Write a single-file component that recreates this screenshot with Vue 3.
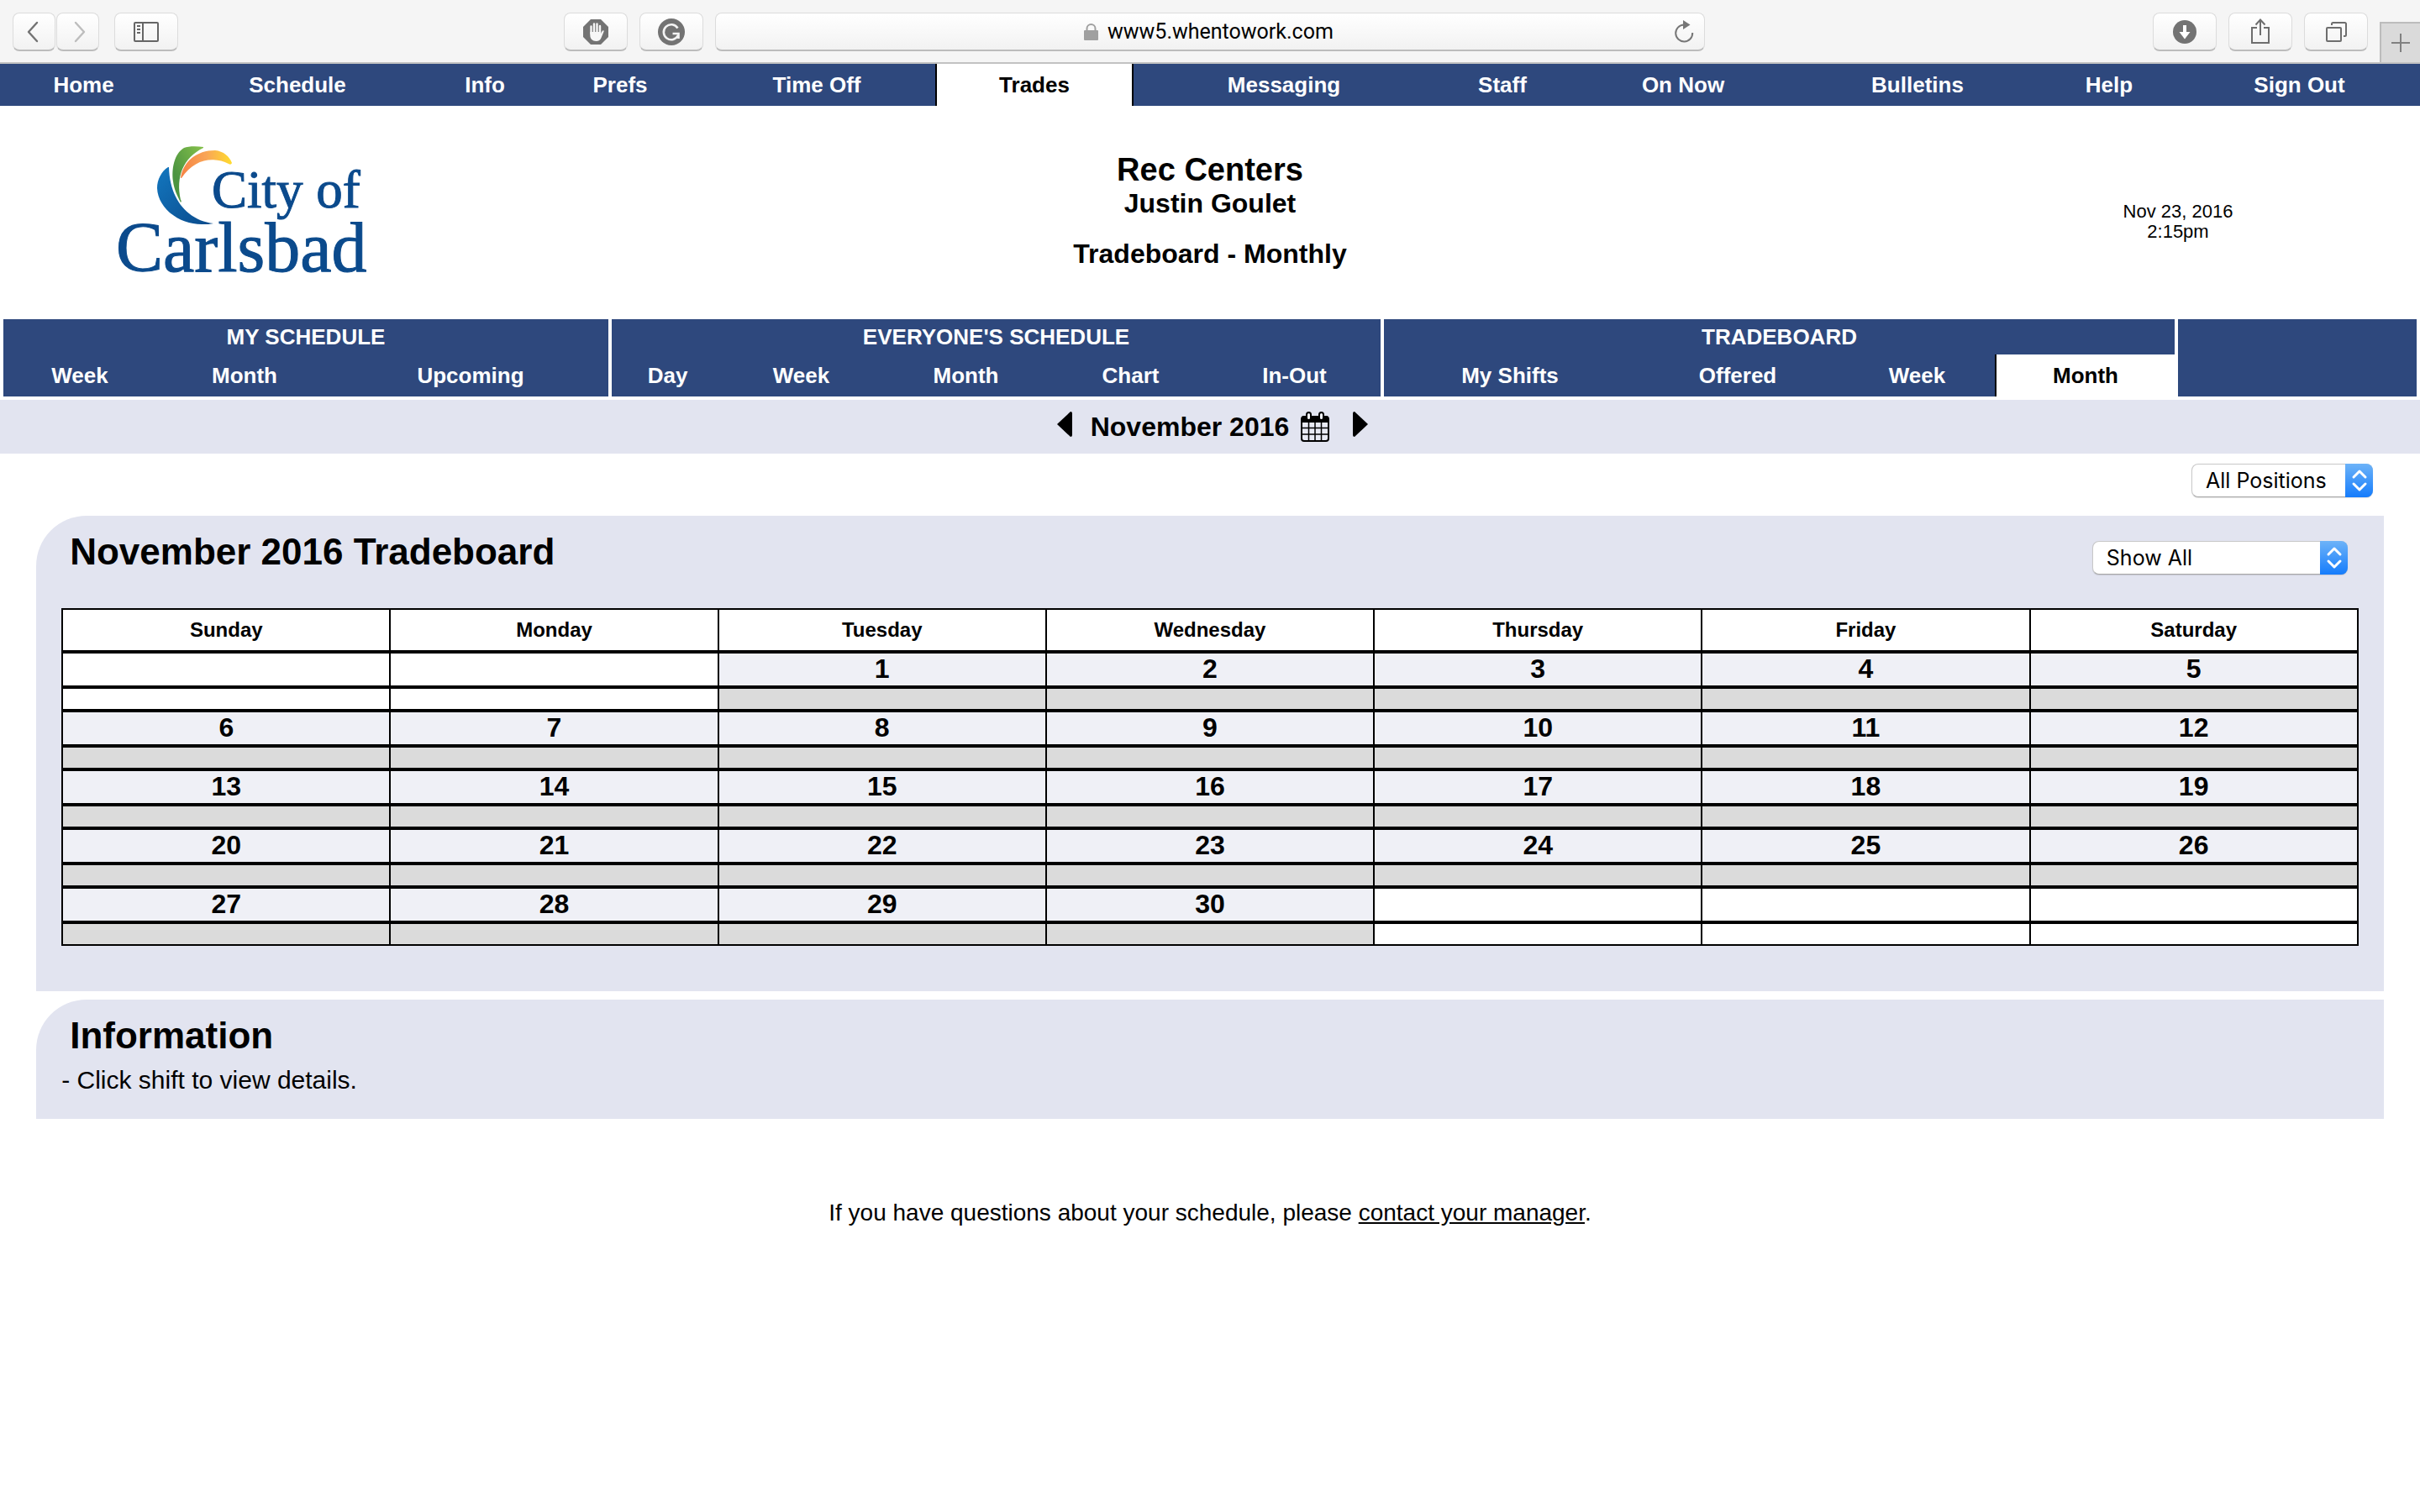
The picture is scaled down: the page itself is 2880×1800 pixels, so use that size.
<script setup>
import { ref } from 'vue'

const address = ref('www5.whentowork.com')
const position = ref('All Positions')
const filter = ref('Show All')

const mainNav = ['Home', 'Schedule', 'Info', 'Prefs', 'Time Off', 'Trades', 'Messaging', 'Staff', 'On Now', 'Bulletins', 'Help', 'Sign Out']

const sections = [
  { id: 'mine', title: 'MY SCHEDULE', links: ['Week', 'Month', 'Upcoming'] },
  { id: 'everyone', title: "EVERYONE'S SCHEDULE", links: ['Day', 'Week', 'Month', 'Chart', 'In-Out'] },
  { id: 'trade', title: 'TRADEBOARD', links: ['My Shifts', 'Offered', 'Week', 'Month'], active: 'Month' },
]

const dayNames = ['Sunday', 'Monday', 'Tuesday', 'Wednesday', 'Thursday', 'Friday', 'Saturday']

// November 2016 starts on a Tuesday and has 30 days
const weeks = Array.from({ length: 5 }, (_, w) =>
  Array.from({ length: 7 }, (_, d) => {
    const n = w * 7 + d - 1
    return n >= 1 && n <= 30 ? n : null
  })
)
</script>

<template>
  <div class="page">
    <div class="toolbar">
      <div class="tools tools-left">
        <div class="group">
          <div class="pair">
            <button class="tool back" aria-label="Back">
              <svg width="18" height="26" viewBox="0 0 18 26"><path d="M12 2 2 13l10 11" fill="none" stroke="#737373" stroke-width="2.4" stroke-linecap="round" stroke-linejoin="round" /></svg>
            </button>
            <button class="tool back" aria-label="Forward">
              <svg width="18" height="26" viewBox="0 0 18 26"><path d="M6 2l10 11L6 24" fill="none" stroke="#bdbdbd" stroke-width="2.4" stroke-linecap="round" stroke-linejoin="round" /></svg>
            </button>
          </div>
          <button class="tool" aria-label="Show sidebar">
            <svg width="30" height="24" viewBox="0 0 30 24"><g fill="none" stroke="#666" stroke-width="2"><rect x="1" y="1" width="28" height="22" rx="1" /><path d="M11 1v22M4 5h4M4 9h4M4 13h4" /></g></svg>
          </button>
        </div>
        <div class="group extensions">
          <button class="tool" aria-label="Content blocker">
            <svg width="30" height="30" viewBox="0 0 30 30">
              <path d="M9 0h12l9 9v12l-9 9H9l-9-9V9z" fill="#737373" />
              <path d="M9.500 17V8.500M13 15V5.500M16.500 15V5.500M20 16V8" stroke="#f7f7f7" stroke-width="2.400" stroke-linecap="round" />
              <path d="M8.300 15h12.900v2l1.600-3.200c.8-1.200 2.200-.6 1.800.7L21.500 22c-1 2.500-3 4-6 4-4.500 0-7.200-3-7.200-7z" fill="#f7f7f7" />
            </svg>
          </button>
          <button class="tool" aria-label="Grammar checker">
            <svg width="32" height="32" viewBox="0 0 32 32">
              <circle cx="16" cy="16" r="16" fill="#737373" />
              <path d="M23.500 11.500A9 9 0 1 0 24 20M17.500 18h7v6" fill="none" stroke="#f4f4f4" stroke-width="2.600" />
            </svg>
          </button>
        </div>
      </div>
      <div class="tool address">
        <svg width="17" height="20" viewBox="0 0 17 20"><path d="M3.500 9V6a5 5 0 0 1 10 0v3" fill="none" stroke="#a0a0a0" stroke-width="2" /><rect y="8" width="17" height="12" rx="1" fill="#a0a0a0" /></svg>
        <input v-model="address" type="text" aria-label="Address" />
        <button class="reload" aria-label="Reload">
          <svg width="24" height="27" viewBox="0 0 24 27"><path d="M12 5.500A10 10 0 1 0 22.200 15" fill="none" stroke="#777" stroke-width="2" /><path d="M11 0v11l8.500-5.500z" fill="#777" /></svg>
        </button>
      </div>
      <div class="tools tools-right">
        <button class="tool" aria-label="Downloads">
          <svg width="28" height="28" viewBox="0 0 28 28"><circle cx="14" cy="14" r="14" fill="#737373" /><path d="M12 6h4v8h4.500L14 22.500 7.500 14H12z" fill="#fff" /></svg>
        </button>
        <button class="tool" aria-label="Share">
          <svg class="share" width="24" height="30" viewBox="0 0 24 30"><path d="M8 11H2v18h20V11h-6M12 20V2M6.500 7.500 12 1.500l5.500 6" fill="none" stroke="#6e6e6e" stroke-width="2" /></svg>
        </button>
        <button class="tool" aria-label="Show all tabs">
          <svg width="25" height="24" viewBox="0 0 25 24"><g fill="none" stroke="#6e6e6e" stroke-width="2"><rect x="1" y="7" width="17" height="16" rx="1" /><path d="M7 4V2.500Q7 1 8.500 1h14Q24 1 24 2.500v13Q24 17 22.500 17H21" /></g></svg>
        </button>
        <button class="new-tab" aria-label="New tab">
          <svg width="22" height="22" viewBox="0 0 22 22"><path d="M11 0v22M0 11h22" stroke="#808080" stroke-width="2" /></svg>
        </button>
      </div>
    </div>

    <nav class="main-nav" aria-label="Main">
      <a v-for="item in mainNav" :key="item" href="#" :class="{ active: item === 'Trades' }">{{ item }}</a>
    </nav>

    <header class="header">
      <svg class="logo" width="300" height="160" viewBox="0 0 300 160" role="img" aria-label="City of Carlsbad">
        <defs>
          <linearGradient id="wave" x1="0" y1="0" x2="1" y2="1"><stop offset="0" stop-color="#1377bf" /><stop offset="1" stop-color="#0a4a8b" /></linearGradient>
          <linearGradient id="leaf" x1="0" y1="1" x2="1" y2="0"><stop offset="0.300" stop-color="#4c9440" /><stop offset="1" stop-color="#86c14b" /></linearGradient>
          <linearGradient id="sun" x1="0" y1="0" x2="1" y2="0"><stop offset="0" stop-color="#f58345" /><stop offset="0.500" stop-color="#f9a557" /><stop offset="1" stop-color="#ffdc2e" /></linearGradient>
        </defs>
        <g transform="translate(2 0)">
          <path d="M60 25C52 30 47 40 47 50c1 24 26 43 53 43 6 0 10 0 14-1C86 89 62 66 61 25z" fill="url(#wave)" />
          <path d="M102 1C94 0 84 0 79 2 67 9 64 28 66 42c1 9 5 17 9 25 1-1 1-2 0-3C69 36 78 14 102 2z" fill="url(#leaf)" />
          <path d="M75 38c3-20 19-33 41-33 10 1 17 7 20 15-1 2-2 2-4 1-18-9-41-6-56 17z" fill="url(#sun)" />
        </g>
        <g class="logo-text">
          <text x="114" y="73" font-size="63">City of</text>
          <text x="0" y="149" font-size="84">Carlsbad</text>
        </g>
      </svg>
      <div class="heading">
        <h1>Rec Centers</h1>
        <p>Justin Goulet</p>
        <p class="view">Tradeboard - Monthly</p>
      </div>
      <div class="clock">Nov 23, 2016<br />2:15pm</div>
    </header>

    <nav class="sub-nav" aria-label="Schedules">
      <section v-for="s in sections" :key="s.id">
        <h2>{{ s.title }}</h2>
        <div class="links" :class="s.id">
          <a v-for="l in s.links" :key="l" href="#" :class="{ active: l === s.active }">{{ l }}</a>
        </div>
      </section>
      <section></section>
    </nav>

    <div class="month-bar">
      <button class="arrow prev" aria-label="Previous month"><svg width="18" height="30" viewBox="0 0 18 30"><path d="M16 0q2 0 2 2v26q0 2-2 2L0 15z" /></svg></button>
      <strong>November 2016</strong>
      <button class="calendar-button" aria-label="Pick a month">
        <svg width="34" height="36" viewBox="0 0 34 36">
          <rect x="1" y="6" width="32" height="29" rx="3" fill="#e8eaf4" stroke="#000" stroke-width="2" />
          <path d="M1 13V8q0-3 3-3h26q3 0 3 3v5z" />
          <path d="M9.500 12v22M17 12v22M24.500 12v22M1 19.500h32M1 27h32" stroke="#000" stroke-width="1.500" />
          <g fill="#f4f5fb" stroke="#000" stroke-width="2"><rect x="7" y="1" width="5" height="9" rx="2.500" /><rect x="22" y="1" width="5" height="9" rx="2.500" /></g>
        </svg>
      </button>
      <button class="arrow next" aria-label="Next month"><svg width="18" height="30" viewBox="0 0 18 30"><path d="M2 0Q0 0 0 2v26q0 2 2 2l16-15z" /></svg></button>
    </div>

    <div class="position-row">
      <div class="picker positions">
        <select v-model="position" aria-label="Positions"><option>All Positions</option></select>
        <svg width="33" height="40" viewBox="0 0 33 40"><path d="M10 16l7-7 7 7M10 24l7 7 7-7" /></svg>
      </div>
    </div>

    <main>
      <section class="panel board">
        <div class="panel-head">
          <h2>November 2016 Tradeboard</h2>
          <div class="picker filter">
            <select v-model="filter" aria-label="Shifts shown"><option>Show All</option></select>
            <svg width="33" height="40" viewBox="0 0 33 40"><path d="M10 16l7-7 7 7M10 24l7 7 7-7" /></svg>
          </div>
        </div>
        <div class="table-wrap">
          <table>
            <thead>
              <tr><th v-for="d in dayNames" :key="d" scope="col">{{ d }}</th></tr>
            </thead>
            <tbody v-for="(week, w) in weeks" :key="w">
              <tr class="dates"><td v-for="(n, i) in week" :key="i" :class="{ day: n }">{{ n }}</td></tr>
              <tr class="shifts"><td v-for="(n, i) in week" :key="i" :class="{ day: n }"></td></tr>
            </tbody>
          </table>
        </div>
      </section>

      <section class="panel info">
        <h2>Information</h2>
        <p>- Click shift to view details.</p>
      </section>
    </main>

    <footer>If you have questions about your schedule, please <a href="#">contact your manager</a>.</footer>
  </div>
</template>

<style>
body {
  background: #fff;
}
</style>

<style scoped>
.page {
  font-family: "Liberation Sans", Arial, sans-serif;
  color: #000;
}
h1, h2, p {
  margin: 0;
}
a {
  color: inherit;
}
button {
  padding: 0;
  border: 0;
  background: none;
}
svg {
  display: block;
}

/* browser toolbar */
.toolbar {
  display: grid;
  grid-template-columns: minmax(0, 851fr) minmax(0, 1178fr) minmax(0, 851fr);
  height: 74px;
  border-bottom: 2px solid #c2c2c2;
  background: #f5f5f5;
}
.tools {
  display: flex;
  padding-top: 15px;
}
.tools-left {
  justify-content: space-between;
  padding-left: 15px;
  padding-right: 14px;
}
.tools-right {
  justify-content: flex-end;
  gap: 14px;
}
.group {
  display: flex;
  gap: 18px;
}
.extensions {
  gap: 14px;
}
.pair {
  display: flex;
  gap: 1px;
}
.tool {
  display: flex;
  align-items: center;
  justify-content: center;
  box-sizing: border-box;
  width: 76px;
  height: 46px;
  border: 1px solid #dcdcdc;
  border-bottom: 2px solid #bcbcbc;
  border-radius: 8px;
  background: linear-gradient(#fff, #f2f2f2);
}
.back {
  width: 51px;
}
.share {
  margin-bottom: 2px;
}
.address {
  position: relative;
  width: 100%;
  margin-top: 15px;
  gap: 11px;
}
.address input {
  width: 272px;
  padding: 0;
  border: 0;
  background: none;
  font: 25px Roboto, sans-serif;
  line-height: 36px;
  color: #000;
}
.reload {
  position: absolute;
  right: 12px;
  top: 8px;
}
.new-tab {
  display: flex;
  align-items: center;
  justify-content: center;
  box-sizing: border-box;
  width: 48px;
  height: 48px;
  margin-top: 11px;
  border: solid #bcbcbc;
  border-width: 2px 0 0 2px;
  background: #dadada;
}

/* site navigation */
.main-nav {
  display: grid;
  grid-template-columns: 199fr 310fr 136fr 186fr 282fr 236fr 358fr 162fr 268fr 290fr 166fr 287fr;
  background: #2e487d;
}
.main-nav a,
.links a {
  color: #fff;
  font-size: 26px;
  font-weight: bold;
  line-height: 50px;
  text-align: center;
  text-decoration: none;
  white-space: nowrap;
}
.main-nav a.active {
  border: solid #000;
  border-width: 0 2px;
  background: #fff;
  color: #000;
}

.header {
  display: grid;
  grid-template-columns: 20% 60% 20%;
  justify-items: center;
  align-items: start;
  height: 254px;
  text-align: center;
}
.logo {
  margin-top: 48px;
}
.logo-text {
  font-family: "Liberation Serif", serif;
  fill: #0b4a8c;
  stroke: #0b4a8c;
  stroke-width: 1px;
}
.heading {
  padding-top: 54px;
  font-weight: bold;
}
.heading h1 {
  font-size: 38px;
  line-height: 44px;
}
.heading p {
  font-size: 32px;
  line-height: 36px;
}
.heading .view {
  margin-top: 24px;
}
.clock {
  padding-top: 114px;
  font-size: 22px;
  line-height: 24px;
}

.sub-nav {
  display: grid;
  grid-template-columns: 720fr 915fr 941fr 284fr;
  gap: 4px;
  padding: 0 4px 4px;
}
.sub-nav section {
  background: #2e487d;
}
.sub-nav h2 {
  color: #fff;
  font-size: 26px;
  line-height: 42px;
  text-align: center;
}
.links {
  display: grid;
}
.links.mine {
  grid-template-columns: 182fr 210fr 328fr;
}
.links.everyone {
  grid-template-columns: 133fr 185fr 207fr 185fr 205fr;
}
.links.trade {
  grid-template-columns: 300fr 242fr 185fr 214fr;
}
.links a.active {
  border-left: 2px solid #000;
  background: #fff;
  color: #000;
}

.month-bar {
  display: flex;
  align-items: center;
  justify-content: center;
  height: 64px;
  padding-left: 6px;
  background: #e2e4f0;
  font-size: 32px;
}
.arrow {
  margin-bottom: 7px;
}
.prev {
  margin-right: 22px;
}
.next {
  margin-left: 28px;
}
.calendar-button {
  margin-left: 14px;
}

/* pickers */
.position-row {
  display: flex;
  justify-content: flex-end;
  padding: 12px 56px 22px;
}
.picker {
  position: relative;
  height: 40px;
}
.positions {
  width: 216px;
}
.filter {
  width: 304px;
  margin-top: 12px;
}
.picker select {
  appearance: none;
  box-sizing: border-box;
  width: 100%;
  height: 40px;
  padding: 0 34px 0 16px;
  border: 1px solid #c8c8c8;
  border-bottom-color: #a8a8a8;
  border-radius: 8px;
  background: #fff;
  box-shadow: 0 1px 1px rgba(0, 0, 0, 0.12);
  color: #000;
  font: 25px Inter, sans-serif;
}
.picker svg {
  position: absolute;
  top: 0;
  right: 0;
  border-radius: 0 8px 8px 0;
  background: linear-gradient(#6db3f8, #157cfc);
  fill: none;
  stroke: #fff;
  stroke-width: 3px;
  stroke-linecap: round;
  stroke-linejoin: round;
  pointer-events: none;
}

/* content panels */
.panel {
  margin: 0 1.5% 10px;
  border-top-left-radius: 60px;
  background: #e2e4f0;
}
.panel h2 {
  font-size: 44px;
  line-height: 50px;
}
.board {
  padding-bottom: 54px;
}
.panel-head {
  display: flex;
  justify-content: space-between;
  box-sizing: border-box;
  height: 110px;
  padding: 18px 43px 0 40px;
}
.table-wrap {
  padding: 0 30px;
}
table {
  width: 100%;
  table-layout: fixed;
  border: solid #000;
  border-width: 2px 0 0 2px;
  border-spacing: 0;
}
th,
td {
  box-sizing: border-box;
  padding: 0;
  border: solid #000;
  border-width: 0 2px 4px 0;
  background: #fff;
  text-align: center;
}
th {
  height: 52px;
  font-size: 24px;
}
.dates td {
  height: 42px;
  font-size: 32px;
  font-weight: bold;
  line-height: 36px;
  vertical-align: top;
}
.dates .day {
  background: #eff0f6;
}
.shifts td {
  height: 28px;
}
.shifts .day {
  background: #dbdbdb;
}
tbody:last-child .shifts td {
  height: 26px;
  border-bottom-width: 2px;
}
.info {
  margin-bottom: 0;
  padding: 18px 30px 28px;
}
.info h2 {
  padding-left: 10px;
}
.info p {
  margin-top: 10px;
  font-size: 30px;
  line-height: 36px;
}

footer {
  margin-top: 96px;
  font-size: 28px;
  line-height: 32px;
  text-align: center;
}
</style>
